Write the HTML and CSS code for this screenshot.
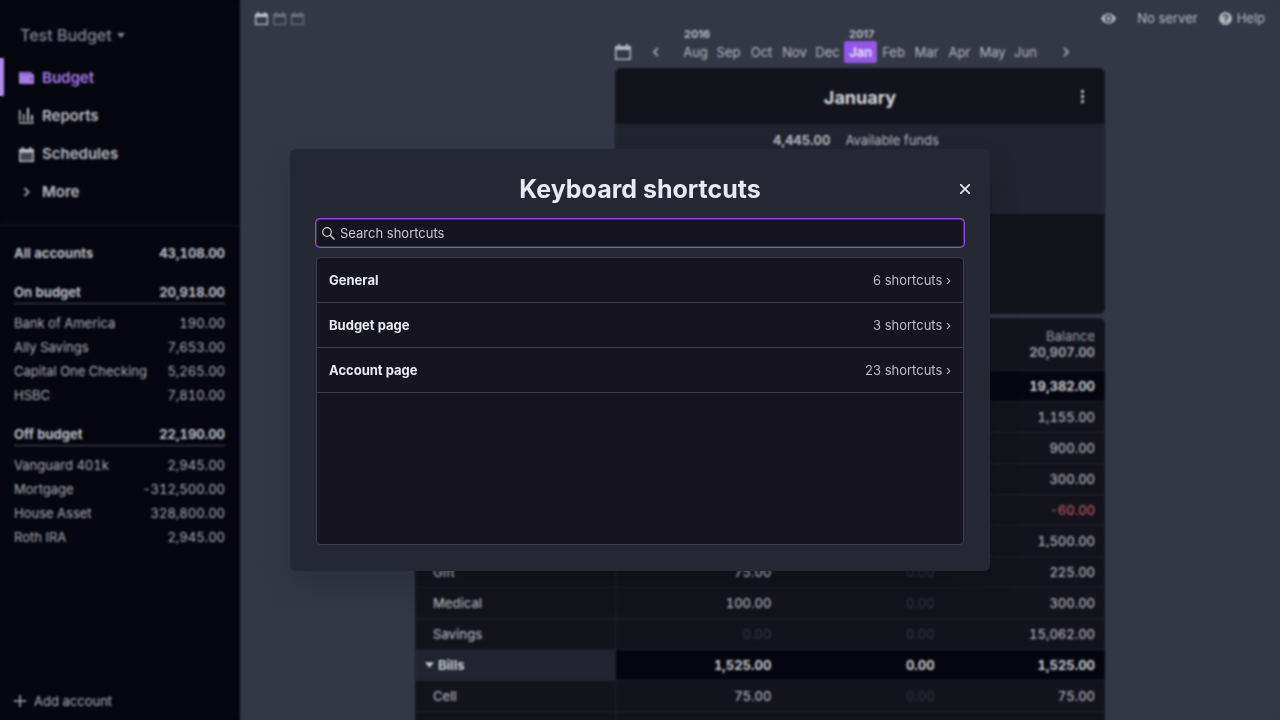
FILE: index.html
```html
<!DOCTYPE html>
<html lang="en">
<head>
<meta charset="utf-8">
<title>Budget</title>
<link rel="stylesheet" href="styles.css">
</head>
<body>
<svg class="defs" aria-hidden="true">
  <symbol id="calendar" viewBox="0 0 16 16"><path fill="currentColor" fill-rule="evenodd" d="M3 0h2v2h6V0h2v2h3v14H0V2h3zM1.500 6v8.500h13V6z"/></symbol>
  <symbol id="calendar-filled" viewBox="0 0 16 16"><path fill="currentColor" d="M3 0h2v2h6V0h2v2h3v4H0V2h3z"/><path fill="currentColor" opacity=".35" d="M1 6h14v9H1z"/><path fill="none" stroke="currentColor" stroke-width="1.500" d="M.75 6v9.250h14.500V6"/></symbol>
  <symbol id="right" viewBox="0 0 10 10"><path fill="none" stroke="currentColor" stroke-width="1.700" d="M3 1l4 4-4 4"/></symbol>
  <symbol id="left" viewBox="0 0 10 10"><path fill="none" stroke="currentColor" stroke-width="1.700" d="M7 1L3 5l4 4"/></symbol>
  <symbol id="down" viewBox="0 0 10 6"><path fill="currentColor" d="M0 0h10L5 6z"/></symbol>
</svg>
<div class="app">
  <aside class="sidebar">
    <button class="budget-name">Test Budget <svg width="8" height="5"><use href="#down"/></svg></button>
    <nav class="nav">
      <a href="#" class="nav-item active"><svg width="15" height="14" viewBox="0 0 15 14"><path fill="currentColor" d="M1 1h11a1 1 0 0 1 1 1v1h1a1 1 0 0 1 1 1v8a1 1 0 0 1-1 1H1a1 1 0 0 1-1-1V2a1 1 0 0 1 1-1z"/><path stroke="#3d2868" stroke-width=".6" d="M2 3h11"/><circle cx="12" cy="8" r="1" fill="#3d2868"/></svg>Budget</a>
      <a href="#" class="nav-item"><svg width="15" height="16" viewBox="0 0 15 16"><path fill="currentColor" d="M0 2h1.500v11H0zM4 6h1.500v7H4zM8 0h2v13H8zM12 7h2v6h-2zM0 14h15v1.500H0z"/></svg>Reports</a>
      <a href="#" class="nav-item"><svg width="15" height="15"><use href="#calendar-filled"/></svg>Schedules</a>
      <a href="#" class="nav-item"><svg width="15" height="10"><use href="#right"/></svg>More</a>
    </nav>
    <div class="accounts">
      <a href="#" class="acct total"><span>All accounts</span><span>43,108.00</span></a>
      <a href="#" class="acct total group"><span>On budget</span><span>20,918.00</span></a>
      <a href="#" class="acct"><span>Bank of America</span><span>190.00</span></a>
      <a href="#" class="acct"><span>Ally Savings</span><span>7,653.00</span></a>
      <a href="#" class="acct"><span>Capital One Checking</span><span>5,265.00</span></a>
      <a href="#" class="acct"><span>HSBC</span><span>7,810.00</span></a>
      <a href="#" class="acct total group"><span>Off budget</span><span>22,190.00</span></a>
      <a href="#" class="acct"><span>Vanguard 401k</span><span>2,945.00</span></a>
      <a href="#" class="acct"><span>Mortgage</span><span>-312,500.00</span></a>
      <a href="#" class="acct"><span>House Asset</span><span>328,800.00</span></a>
      <a href="#" class="acct"><span>Roth IRA</span><span>2,945.00</span></a>
    </div>
    <button class="add"><svg width="12" height="12" viewBox="0 0 12 12"><path stroke="currentColor" stroke-width="1.500" d="M6 0v12M0 6h12"/></svg>Add account</button>
  </aside>

  <main class="main">
    <header class="topbar">
      <div class="counts">
        <button aria-label="One month"><svg width="13" height="13"><use href="#calendar"/></svg></button>
        <button class="dim" aria-label="Two months"><svg width="13" height="13"><use href="#calendar"/></svg></button>
        <button class="dim" aria-label="Three months"><svg width="13" height="13"><use href="#calendar"/></svg></button>
      </div>
      <div class="actions">
        <button aria-label="Privacy mode"><svg width="15" height="11" viewBox="0 0 15 11"><path fill="currentColor" fill-rule="evenodd" d="M0 5.500C1.500 2 4.300.5 7.500.5S13.500 2 15 5.500c-1.500 3.500-4.300 5-7.500 5S1.500 9 0 5.500zM7.500 2a3.500 3.500 0 1 0 0 7 3.500 3.500 0 0 0 0-7z"/><circle cx="7.500" cy="5.500" r="2" fill="currentColor"/></svg></button>
        <button>No server</button>
        <button class="help"><svg width="13" height="13" viewBox="0 0 13 13"><circle cx="6.500" cy="6.500" r="6.500" fill="currentColor"/><path fill="none" stroke="#343746" stroke-width="1.500" d="M4.500 5c0-2.700 4-2.500 4 0 0 1.500-2 1.300-2 3M6.500 9v1.500"/></svg>Help</button>
      </div>
    </header>

    <div class="budget">
      <div class="month-col">
        <div class="picker">
          <button class="today" aria-label="Today"><svg width="16" height="16"><use href="#calendar"/></svg></button>
          <button class="prev" aria-label="Previous month"><svg width="10" height="10"><use href="#left"/></svg></button>
          <div class="months">
            <div class="month"><b>2016</b><button>Aug</button></div>
            <div class="month"><button>Sep</button></div>
            <div class="month"><button>Oct</button></div>
            <div class="month"><button>Nov</button></div>
            <div class="month"><button>Dec</button></div>
            <div class="month current"><b>2017</b><button>Jan</button></div>
            <div class="month"><button>Feb</button></div>
            <div class="month"><button>Mar</button></div>
            <div class="month"><button>Apr</button></div>
            <div class="month"><button>May</button></div>
            <div class="month"><button>Jun</button></div>
          </div>
          <button class="next" aria-label="Next month"><svg width="10" height="10"><use href="#right"/></svg></button>
        </div>
        <section class="summary">
          <div class="summary-head">
            <h2>January</h2>
            <button aria-label="Month menu"><svg width="4" height="13" viewBox="0 0 4 13"><path fill="currentColor" d="M0 0h3v3H0zM0 5h3v3H0zM0 10h3v3H0z"/></svg></button>
          </div>
          <div class="funds"><b>4,445.00</b><span>Available funds</span></div>
          <div class="to-budget"></div>
        </section>
      </div>
      <table class="table">
        <colgroup><col class="name-col"><col><col><col></colgroup>
        <thead><tr><th></th><th></th><th></th><th>Balance<b>20,907.00</b></th></tr></thead>
        <tbody>
          <tr class="grp"><th></th><td></td><td></td><td>19,382.00</td></tr>
          <tr><th></th><td></td><td></td><td>1,155.00</td></tr>
          <tr><th></th><td></td><td></td><td>900.00</td></tr>
          <tr><th></th><td></td><td></td><td>300.00</td></tr>
          <tr><th></th><td></td><td></td><td class="neg">-60.00</td></tr>
          <tr><th></th><td></td><td></td><td>1,500.00</td></tr>
          <tr><th>Gift</th><td>75.00</td><td class="zero">0.00</td><td>225.00</td></tr>
          <tr><th>Medical</th><td>100.00</td><td class="zero">0.00</td><td>300.00</td></tr>
          <tr><th>Savings</th><td class="zero">0.00</td><td class="zero">0.00</td><td>15,062.00</td></tr>
          <tr class="grp"><th><svg width="9" height="6"><use href="#down"/></svg>Bills</th><td>1,525.00</td><td>0.00</td><td>1,525.00</td></tr>
          <tr><th>Cell</th><td>75.00</td><td class="zero">0.00</td><td>75.00</td></tr>
          <tr><th></th><td></td><td></td><td></td></tr>
        </tbody>
      </table>
    </div>
  </main>
</div>

<div class="overlay">
  <div class="modal" role="dialog" aria-modal="true" aria-labelledby="modal-title">
    <div class="modal-head">
      <h1 id="modal-title">Keyboard shortcuts</h1>
      <button class="close" aria-label="Close"><svg width="10" height="10" viewBox="0 0 10 10"><path stroke="currentColor" stroke-width="1.700" d="M0 0l10 10M10 0L0 10"/></svg></button>
    </div>
    <label class="search">
      <svg width="13" height="13" viewBox="0 0 13 13"><circle cx="5" cy="5" r="4.300" fill="none" stroke="currentColor" stroke-width="1.300"/><path stroke="currentColor" stroke-width="1.500" d="M8 8l4.500 4.500"/></svg>
      <input type="text" placeholder="Search shortcuts" aria-label="Search shortcuts">
    </label>
    <div class="list">
      <button class="row"><b>General</b><span>6 shortcuts ›</span></button>
      <button class="row"><b>Budget page</b><span>3 shortcuts ›</span></button>
      <button class="row"><b>Account page</b><span>23 shortcuts ›</span></button>
    </div>
  </div>
</div>
</body>
</html>
```
FILE: styles.css
```css
* { box-sizing: border-box; }
body {
  margin: 0;
  font-family: Inter, "Liberation Sans", sans-serif;
  font-size: 13px;
  line-height: 16px;
  color: #c6c8ce;
  background: #343746;
}
button, input { font: inherit; color: inherit; background: none; border: 0; padding: 0; }
a { color: inherit; text-decoration: none; }
h1, h2 { margin: 0; }
svg { display: block; flex: none; }
.defs { position: absolute; width: 0; height: 0; }

.app { display: flex; height: 100vh; overflow: hidden; }

.sidebar {
  flex: 0 0 240px;
  display: flex;
  flex-direction: column;
  background: #05060f;
  color: #a9abb1;
}
.budget-name {
  display: flex;
  align-items: center;
  gap: 5px;
  margin: 25px 20px 13px;
  font-size: 16px;
  line-height: 20px;
  font-weight: 500;
  color: #80838f;
}
.nav { padding-bottom: 15px; border-bottom: 1px solid #191a26; }
.nav-item {
  display: flex;
  align-items: center;
  gap: 8px;
  height: 38px;
  padding: 2px 0 0 19px;
  font-size: 15px;
  font-weight: 600;
  color: #bcbec4;
}
.nav-item.active { border-left: 4px solid #b08aef; padding-left: 15px; color: #a57be6; }
.accounts { padding: 15px 15px 0 14px; font-variant-numeric: tabular-nums; }
.acct { display: flex; justify-content: space-between; align-items: center; height: 24px; }
.acct.total { font-weight: 700; color: #bcbec4; }
.acct.group { margin: 15px 0 7px; border-bottom: 1px solid #45464e; }
.add { display: flex; align-items: center; gap: 8px; margin: auto 14px 11px; }

.main { flex: 1; display: flex; flex-direction: column; min-width: 0; color: #b4b6be; }
.topbar { display: flex; justify-content: space-between; align-items: center; height: 27px; padding: 10px 15px 0; }
.counts { display: flex; gap: 5px; color: #c6c8ce; }
.dim { color: #6f727e; }
.actions { display: flex; align-items: center; gap: 21px; }
.help { display: flex; align-items: center; gap: 5px; }

.budget { width: 690px; max-width: 100%; margin: 0 auto; }
.month-col { margin-left: 200px; }
.picker { display: flex; align-items: flex-end; height: 37px; }
.picker > button { display: flex; align-items: center; height: 22px; }
.today { width: 36px; }
.prev { width: 28px; }
.months { flex: 0 0 363px; display: flex; align-items: flex-end; }
.month { flex: 1; display: flex; flex-direction: column; text-align: center; }
.month b { padding-left: 5px; font-size: 11px; line-height: 14px; text-align: left; }
.month button { height: 22px; font-size: 13px; border-radius: 2px; }
.current button { background: #9257e6; color: #e4daf5; font-weight: 700; }
.next { margin-left: 19px; }

.summary { margin-top: 5px; border-radius: 6px; overflow: hidden; background: #13131c; }
.summary-head { position: relative; height: 57px; padding-top: 4px; display: flex; align-items: center; justify-content: center; border-bottom: 1px solid #262834; }
.summary-head h2 { font-size: 18px; line-height: 24px; color: #d2d4d8; }
.summary-head button { position: absolute; right: 20px; top: 22px; }
.funds { display: flex; height: 89px; padding: 7px 0 0 158px; gap: 15px; background: #21232e; font-variant-numeric: tabular-nums; }
.to-budget { height: 100px; }

.table {
  width: 100%;
  margin-top: 4px;
  table-layout: fixed;
  border-collapse: separate;
  border-spacing: 0;
  border-radius: 6px 6px 0 0;
  overflow: hidden;
  background: #13131c;
  font-variant-numeric: tabular-nums;
}
.name-col { width: 200px; }
.table th, .table td { height: 31px; padding: 0 7px 0 0; border-bottom: 1px solid #20212d; text-align: right; font-weight: 500; color: #a9abb3; }
.table th:last-child, .table td:last-child { padding-right: 10px; }
.table td:first-of-type { border-left: 1px solid #20212d; }
.table thead th { height: 53px; font-weight: 400; color: #9a9da6; }
.table thead b { display: block; }
.table tbody th { padding-left: 18px; text-align: left; font-weight: 500; }
.table .grp th { padding-left: 10px; background: #21232e; font-weight: 700; color: #c9cbd0; }
.table .grp td { background: #05060f; font-weight: 700; color: #c9cbd0; }
.grp svg { display: inline-block; margin-right: 4px; vertical-align: 2px; }
.table .zero { color: #2f3341; font-weight: 400; }
.table .neg { color: #a8545c; }

.overlay {
  position: fixed;
  inset: 0;
  display: flex;
  align-items: center;
  justify-content: center;
  backdrop-filter: blur(1px);
}
.modal {
  width: 700px;
  max-width: 92%;
  padding: 20px 26px 26px;
  border-radius: 6px;
  background: #252733;
  box-shadow: 0 15px 30px rgba(0, 0, 0, .15);
}
.modal-head { position: relative; height: 40px; display: flex; align-items: center; justify-content: center; }
.modal-head h1 { font-size: 25px; line-height: 30px; font-weight: 700; color: #e8ecf0; }
.close { position: absolute; right: -11px; top: 10px; padding: 5px; color: #e8ecf0; }
.search {
  display: flex;
  align-items: center;
  gap: 5px;
  height: 28px;
  margin: 10px 0;
  padding: 0 5px;
  border: 1px solid #3a3c4b;
  border-radius: 4px;
  background: #15141f;
  box-shadow: 0 0 0 1px #9446ed;
}
.search input { flex: 1; min-width: 0; outline: 0; }
.search input::placeholder { color: #c6cad2; opacity: 1; }
.list { height: 288px; border: 1px solid #3a3c4b; border-radius: 4px; background: #15141f; overflow: auto; }
.row {
  display: flex;
  align-items: center;
  justify-content: space-between;
  width: 100%;
  height: 45px;
  padding: 0 12px;
  border-bottom: 1px solid #3a3c4b;
}
.row b { color: #e8ecf0; }
.row span { color: #b9bec8; }
```
